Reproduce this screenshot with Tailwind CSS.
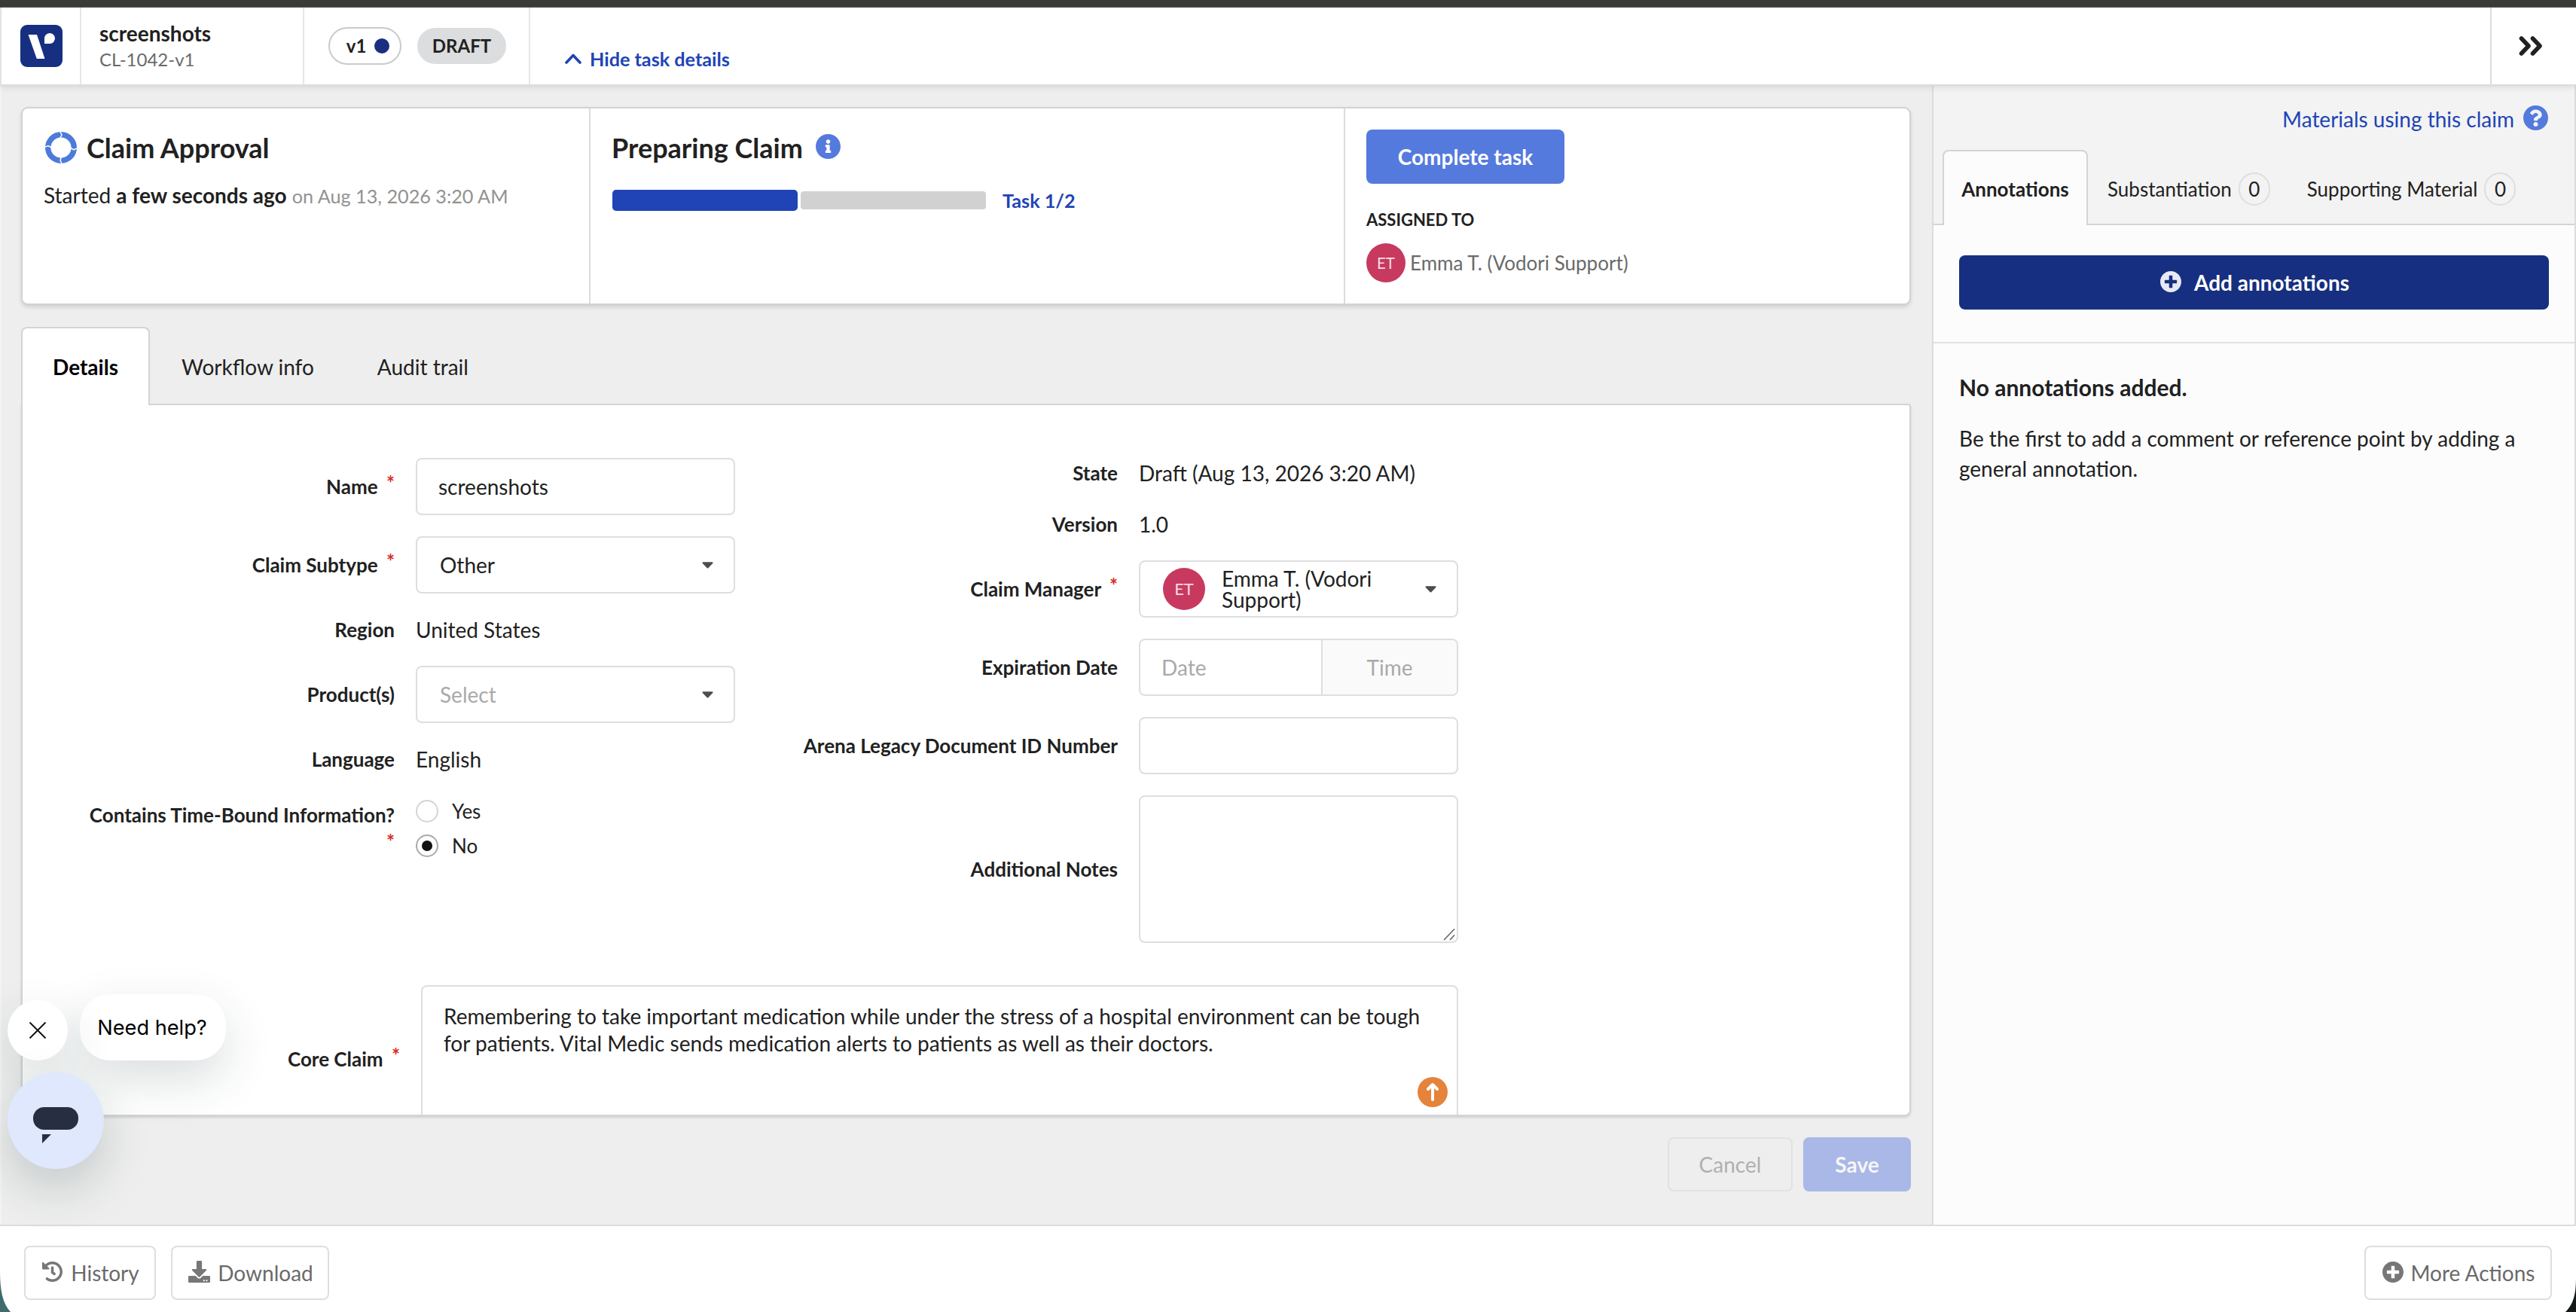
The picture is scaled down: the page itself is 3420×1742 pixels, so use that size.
<!DOCTYPE html>
<html lang="en">
<head>
    <meta charset="UTF-8">
    <meta name="viewport" content="width=device-width, initial-scale=1.0">
    <title>screenshots - CL-1042-v1</title>
    <script src="https://cdn.jsdelivr.net/npm/@tailwindcss/browser@4"></script>
</head>
<body class="relative flex flex-col w-[3420px] h-[1742px] overflow-hidden bg-white text-[#212121] text-[28px] leading-[40px] font-['Lato',sans-serif]">

    <!-- shared icons -->
    <svg class="hidden">
        <symbol id="plus-circle" viewBox="8 8 496 496"><path d="M256 8C119 8 8 119 8 256s111 248 248 248 248-111 248-248S393 8 256 8zm144 276c0 6.600-5.400 12-12 12h-92v92c0 6.600-5.400 12-12 12h-56c-6.600 0-12-5.400-12-12v-92h-92c-6.600 0-12-5.400-12-12v-56c0-6.600 5.400-12 12-12h92v-92c0-6.600 5.400-12 12-12h56c6.600 0 12 5.400 12 12v92h92c6.600 0 12 5.400 12 12v56z"/></symbol>
        <symbol id="caret" viewBox="0 0 16 9"><path d="M1.500 0h13c1 0 1.300 1 .7 1.700L8.800 8.500c-.5.500-1.100.500-1.600 0L.8 1.700C.2 1 .5 0 1.500 0z"/></symbol>
    </svg>

    <div class="h-[10px] shrink-0 bg-[#393c35] border-b-2 border-[#454541]"></div>

    <!-- header -->
    <header class="relative z-10 flex h-[104px] shrink-0 bg-white border-b-2 border-l-2 border-b-[#dcdcdc] border-l-[#e2e2e2] shadow-[0_2px_8px_rgba(0,0,0,0.10)]">
        <div class="w-[106px] border-r-2 border-[#e6e6e6] pl-[25px] pt-[23px]">
            <svg class="w-[56px] h-[56px]" viewBox="0 0 56 56">
                <rect width="56" height="56" rx="9" fill="#162f80"/>
                <path d="M10.500 13h11.500L32.500 45H21.800z" fill="#fff"/>
                <path d="M32 25V18.500a7 7 0 1 1 7 6.500z" fill="#fff"/>
            </svg>
        </div>
        <div class="w-[296px] border-r-2 border-[#e6e6e6] pl-[24px] pt-[17px]">
            <div class="font-bold leading-[34px]">screenshots</div>
            <div class="text-[24px] leading-[36px] text-[#6a6a6a]">CL-1042-v1</div>
        </div>
        <div class="w-[300px] border-r-2 border-[#e6e6e6] pl-[32px] flex items-center gap-[21px] text-[24px] font-bold">
            <div class="w-[97px] h-[50px] rounded-full border-2 border-[#cacaca] flex items-center justify-center gap-[11px] pl-[8px]">v1<span class="w-[20px] h-[20px] rounded-full bg-[#1b2f80]"></span></div>
            <div class="w-[118px] h-[48px] rounded-full bg-[#dcddde] flex items-center justify-center">DRAFT</div>
        </div>
        <div class="flex-1 pl-[46px] pt-[48px]">
            <a class="flex items-center gap-[11px] text-[25.2px] font-bold text-[#2044b5]">
                <svg class="w-[22px] h-[14px]" viewBox="0 0 22 14" fill="none" stroke="currentColor" stroke-width="3.600" stroke-linecap="round" stroke-linejoin="round"><path d="M2 12l9-9.500L20 12"/></svg>
                Hide task details
            </a>
        </div>
        <div class="w-[114px] border-l-2 border-[#dcdcdc] pl-[36px] pt-[37px]">
            <svg class="w-[32px] h-[28px]" viewBox="0 0 32 28" fill="none" stroke="#212121" stroke-width="5.600" stroke-linecap="round" stroke-linejoin="round"><path d="M3.500 4l9.500 10-9.500 10M18.500 4L28 14l-9.500 10"/></svg>
        </div>
    </header>

    <div class="flex h-[1512px] shrink-0">
        <main class="w-[2565px] border-l-2 border-[#f3f3f3] bg-[#eeeeee] pl-[26px] pt-[28px]">

            <!-- task card -->
            <section class="flex w-[2509px] h-[263px] bg-white border-2 border-[#d2d2d2] rounded-[9px] shadow-[0_3px_5px_rgba(0,0,0,0.12)]">
                <div class="w-[754px] border-r-2 border-[#dcdcdc] pl-[28px] pt-[30px]">
                    <div class="flex items-center gap-[13px] pl-[2px] text-[36px] leading-[44px] font-bold">
                        <svg class="w-[42px] h-[42px]" viewBox="0 0 42 42" fill="none">
                            <circle cx="21" cy="21" r="17.300" stroke="#4c7bd9" stroke-width="7.400"/>
                            <path d="M20 0l2 4-2 4M42 22l-4 2-5-3M22 42l-2-4 1.500-4.500M0 20l4-1.500 4.500 2.500" stroke="#fff" stroke-width="1.500"/>
                        </svg>
                        Claim Approval
                    </div>
                    <div class="mt-[21px]">Started <b>a few seconds ago</b> <span class="text-[25.2px] text-[#929292]">on Aug 13, 2026 3:20 AM</span></div>
                </div>
                <div class="w-[1002px] border-r-2 border-[#dcdcdc] pl-[28px] pt-[30px]">
                    <div class="flex items-center gap-[17px] text-[36px] leading-[44px] font-bold">
                        Preparing Claim
                        <svg class="w-[33px] h-[33px] mb-[4px]" viewBox="8 8 496 496" fill="#557add"><path d="M256 8C119.043 8 8 119.083 8 256c0 136.997 111.043 248 248 248s248-111.003 248-248C504 119.083 392.957 8 256 8zm0 110c23.196 0 42 18.804 42 42s-18.804 42-42 42-42-18.804-42-42 18.804-42 42-42zm56 254c0 6.627-5.373 12-12 12h-88c-6.627 0-12-5.373-12-12v-24c0-6.627 5.373-12 12-12h12v-64h-12c-6.627 0-12-5.373-12-12v-24c0-6.627 5.373-12 12-12h64c6.627 0 12 5.373 12 12v100h12c6.627 0 12 5.373 12 12v24z"/></svg>
                    </div>
                    <div class="flex items-center mt-[28px] pl-[1px]">
                        <div class="w-[246px] h-[28px] rounded-[5px] bg-[#2044b5]"></div>
                        <div class="w-[246px] h-[24px] rounded-[4px] bg-[#d1d1d1] ml-[4px]"></div>
                        <div class="ml-[22px] text-[25.2px] font-bold text-[#2044b5]">Task 1/2</div>
                    </div>
                </div>
                <div class="pl-[28px] pt-[28px]">
                    <button class="block w-[263px] h-[72px] rounded-[8px] bg-[#557add] text-white font-bold">Complete task</button>
                    <div class="mt-[30px] text-[22px] leading-[36px] font-bold">ASSIGNED TO</div>
                    <div class="flex items-center gap-[6px] mt-[13px] text-[26px] text-[#6a6a6a]">
                        <span class="w-[52px] h-[52px] rounded-full bg-[#c8395f] text-[#f6dde4] text-[20.5px] flex items-center justify-center">ET</span>
                        Emma T. (Vodori Support)
                    </div>
                </div>
            </section>

            <!-- tabs -->
            <nav class="flex h-[102px] mt-[29px]">
                <div class="relative h-[104px] w-[171px] shrink-0 bg-white border-2 border-b-0 border-[#d4d4d5] rounded-t-[8px] flex items-center justify-center font-bold text-black">Details</div>
                <div class="flex items-center pl-[42px] pr-[42px] pt-[4px]">Workflow info</div>
                <div class="flex items-center pl-[42px] pt-[4px]">Audit trail</div>
            </nav>

            <!-- details form -->
            <section class="relative w-[2509px] h-[946px]">
                <!-- the active tab runs into the panel -->
                <div class="absolute z-10 left-[2px] top-0 w-[167px] h-[2px] bg-white"></div>
                <div class="h-full overflow-hidden bg-white border-2 border-[#d4d4d5] rounded-b-[8px] rounded-tr-[4px] shadow-[0_2px_3px_rgba(0,0,0,0.12)] pt-[70px]">
                    <div class="flex">
                        <div class="w-[956px] flex flex-col gap-[28px]">
                            <div class="flex items-center gap-[28px]">
                                <label class="w-[494px] text-right text-[26px] font-bold">Name <span class="relative -top-[5px] ml-[5px] text-[#db2828]">*</span></label>
                                <div class="w-[424px] h-[76px] border-2 border-[#dedede] rounded-[8px] pl-[28px] flex items-center">screenshots</div>
                            </div>
                            <div class="flex items-center gap-[28px]">
                                <label class="w-[494px] text-right text-[26px] font-bold">Claim Subtype <span class="relative -top-[5px] ml-[5px] text-[#db2828]">*</span></label>
                                <div class="w-[424px] h-[76px] border-2 border-[#dedede] rounded-[8px] pl-[30px] pr-[27px] flex items-center justify-between">Other<svg class="w-[15px] h-[9px] fill-[#4d4d4d]"><use href="#caret"/></svg></div>
                            </div>
                            <div class="flex items-center gap-[28px]">
                                <label class="w-[494px] text-right text-[26px] font-bold">Region</label>
                                <div>United States</div>
                            </div>
                            <div class="flex items-center gap-[28px]">
                                <label class="w-[494px] text-right text-[26px] font-bold">Product(s)</label>
                                <div class="w-[424px] h-[76px] border-2 border-[#dedede] rounded-[8px] pl-[30px] pr-[27px] flex items-center justify-between text-[#a9a9a9]">Select<svg class="w-[15px] h-[9px] fill-[#4d4d4d]"><use href="#caret"/></svg></div>
                            </div>
                            <div class="flex items-center gap-[28px]">
                                <label class="w-[494px] text-right text-[26px] font-bold">Language</label>
                                <div>English</div>
                            </div>
                            <div class="flex items-start gap-[28px]">
                                <label class="w-[494px] mt-[6px] text-right text-[26px] font-bold">Contains Time-Bound Information?<br><span class="relative -top-[5px] text-[#db2828]">*</span></label>
                                <div class="-mt-[2px] text-[26px]">
                                    <div class="flex items-center gap-[18px] h-[46px]"><span class="w-[30px] h-[30px] rounded-full border-2 border-[#d4d4d5]"></span>Yes</div>
                                    <div class="flex items-center gap-[18px] h-[46px]"><span class="w-[30px] h-[30px] rounded-full border-2 border-[#aaaaaa] flex items-center justify-center"><span class="w-[14px] h-[14px] rounded-full bg-[#111]"></span></span>No</div>
                                </div>
                            </div>
                        </div>

                        <div class="flex flex-col gap-[28px]">
                            <div class="flex items-center gap-[28px]">
                                <label class="w-[498px] text-right text-[26px] font-bold">State</label>
                                <div>Draft (Aug 13, 2026 3:20 AM)</div>
                            </div>
                            <div class="flex items-center gap-[28px]">
                                <label class="w-[498px] text-right text-[26px] font-bold">Version</label>
                                <div>1.0</div>
                            </div>
                            <div class="flex items-center gap-[28px]">
                                <label class="w-[498px] text-right text-[26px] font-bold">Claim Manager <span class="relative -top-[5px] ml-[5px] text-[#db2828]">*</span></label>
                                <div class="w-[424px] h-[76px] border-2 border-[#dedede] rounded-[8px] pl-[30px] pr-[27px] flex items-center">
                                    <span class="w-[56px] h-[56px] rounded-full bg-[#c8395f] text-[#f6dde4] text-[22px] flex items-center justify-center">ET</span>
                                    <span class="ml-[22px] flex-1 leading-[28px]">Emma T. (Vodori<br>Support)</span>
                                    <svg class="w-[15px] h-[9px] fill-[#4d4d4d]"><use href="#caret"/></svg>
                                </div>
                            </div>
                            <div class="flex items-center gap-[28px]">
                                <label class="w-[498px] text-right text-[26px] font-bold">Expiration Date</label>
                                <div class="w-[424px] h-[76px] border-2 border-[#dedede] rounded-[8px] overflow-hidden flex text-[#a9a9a9]">
                                    <div class="w-[242px] border-r-2 border-[#dedede] pl-[28px] flex items-center">Date</div>
                                    <div class="flex-1 bg-[#fafafa] flex items-center justify-center">Time</div>
                                </div>
                            </div>
                            <div class="flex items-center gap-[28px]">
                                <label class="w-[498px] text-right text-[26px] font-bold">Arena Legacy Document ID Number</label>
                                <div class="w-[424px] h-[76px] border-2 border-[#dedede] rounded-[8px]"></div>
                            </div>
                            <div class="flex items-center gap-[28px]">
                                <label class="w-[498px] text-right text-[26px] font-bold">Additional Notes</label>
                                <div class="w-[424px] h-[196px] border-2 border-[#dedede] rounded-[8px] flex items-end justify-end">
                                    <svg class="w-[18px] h-[18px]" viewBox="0 0 18 18" stroke="#606060" stroke-width="1.500"><path d="M1 16L15 1.500M9 16l6-6.500"/></svg>
                                </div>
                            </div>
                        </div>
                    </div>

                    <div class="flex items-center gap-[28px] mt-[56px]">
                        <label class="w-[501px] text-right text-[26px] font-bold">Core Claim <span class="relative -top-[5px] ml-[5px] text-[#db2828]">*</span></label>
                        <div class="relative w-[1377px] h-[196px] border-2 border-[#dedede] rounded-[8px] pl-[28px] pt-[21px] leading-[36px]">
                            Remembering to take important medication while under the stress of a hospital environment can be tough<br>for patients. Vital Medic sends medication alerts to patients as well as their doctors.
                            <svg class="absolute right-[12px] top-[120px] w-[40px] h-[40px]" viewBox="0 0 40 40" fill="none" stroke="#fff" stroke-width="4" stroke-linecap="round" stroke-linejoin="round"><circle cx="20" cy="20" r="20" fill="#e5833a" stroke="none"/><path d="M20 30V10.500M14 16l6-6 6 6"/></svg>
                        </div>
                    </div>
                </div>
            </section>

            <div class="flex justify-end gap-[14px] w-[2509px] mt-[28px]">
                <button class="w-[166px] h-[72px] rounded-[8px] border-2 border-[#e1e1e1] text-[#b0b0b0]">Cancel</button>
                <button class="w-[143px] h-[72px] rounded-[8px] bg-[#a9b8e6] text-[#f6f6f6] font-bold">Save</button>
            </div>
        </main>

        <!-- annotations sidebar -->
        <aside class="flex-1 border-l-2 border-r-2 border-[#dcdcdc] bg-[#fcfcfc]">
            <div class="h-[185px] bg-[#f3f3f3] border-b-2 border-[#d4d4d5] pt-[24px]">
                <div class="flex justify-end items-center gap-[12px] pr-[35px] text-[#2044b5]">
                    Materials using this claim
                    <svg class="w-[33px] h-[33px] mb-[3px]" viewBox="8 8 496 496" fill="#557add"><path d="M504 256c0 136.997-111.043 248-248 248S8 392.997 8 256C8 119.083 119.043 8 256 8s248 111.083 248 248zM262.655 90c-54.497 0-89.255 22.957-116.549 63.758-3.536 5.286-2.353 12.415 2.715 16.258l34.699 26.310c5.205 3.947 12.621 3.008 16.665-2.122 17.864-22.658 30.113-35.797 57.303-35.797 20.429 0 45.698 13.148 45.698 32.958 0 14.976-12.363 22.667-32.534 33.976C247.128 238.528 216 254.941 216 296v4c0 6.627 5.373 12 12 12h56c6.627 0 12-5.373 12-12v-1.333c0-28.462 83.186-29.647 83.186-106.667 0-58.002-60.165-102-116.531-102zM256 338c-25.365 0-46 20.635-46 46 0 25.364 20.635 46 46 46s46-20.636 46-46c0-25.365-20.635-46-46-46z"/></svg>
                </div>
                <div class="flex h-[98px] mt-[21px] pl-[12px] text-[26px]">
                    <div class="relative w-[193px] h-[100px] bg-[#fcfcfc] border-2 border-b-0 border-[#d4d4d5] rounded-t-[8px] flex items-center justify-center font-bold pt-[2px]">Annotations</div>
                    <div class="flex items-center gap-[9px] pl-[26px] pt-[5px]">Substantiation<span class="w-[42px] h-[44px] rounded-full border-2 border-[#dedede] flex items-center justify-center">0</span></div>
                    <div class="flex items-center gap-[9px] pl-[49px] pt-[5px]">Supporting Material<span class="w-[42px] h-[44px] rounded-full border-2 border-[#dedede] flex items-center justify-center">0</span></div>
                </div>
            </div>
            <div class="h-[157px] border-b-2 border-[#e2e2e2] pl-[34px] pt-[40px]">
                <button class="w-[783px] h-[72px] rounded-[8px] bg-[#162f80] text-white font-bold flex items-center justify-center gap-[17px] pl-[2px]"><svg class="w-[28px] h-[28px] fill-[#e7e9f2] mb-[2px]"><use href="#plus-circle"/></svg>Add annotations</button>
            </div>
            <div class="pl-[34px] pt-[38px]">
                <h3 class="text-[30px] font-bold">No annotations added.</h3>
                <p class="mt-[28px]">Be the first to add a comment or reference point by adding a<br>general annotation.</p>
            </div>
        </aside>
    </div>

    <!-- bottom bar -->
    <footer class="flex flex-1 items-start justify-between bg-white border-t-2 border-[#dcdcdc] pl-[32px] pr-[32px] pt-[26px] text-[#6a6a6a]">
        <div class="flex gap-[20px]">
            <button class="w-[175px] h-[72px] rounded-[8px] border-2 border-[#dedede] flex items-center justify-center gap-[11px] pl-[2px]"><svg class="w-[27px] h-[27px] fill-[#777] mb-[4px]" viewBox="8 8 496 496"><path d="M504 255.531c.253 136.640-111.180 248.372-247.820 248.468-59.015.042-113.223-20.530-155.822-54.911-11.077-8.940-11.905-25.541-1.839-35.607l11.267-11.267c8.609-8.609 22.353-9.551 31.891-1.984C173.062 425.135 212.781 440 256 440c101.705 0 184-82.311 184-184 0-101.705-82.311-184-184-184-48.814 0-93.149 18.969-126.068 49.932l50.754 50.754c10.080 10.080 2.941 27.314-11.313 27.314H24c-8.837 0-16-7.163-16-16V38.627c0-14.254 17.234-21.393 27.314-11.314l49.372 49.372C129.209 34.136 189.552 8 256 8c136.810 0 247.747 110.780 248 247.531zm-180.912 78.784l9.823-12.630c8.138-10.463 6.253-25.542-4.210-33.679L288 256.349V152c0-13.255-10.745-24-24-24h-16c-13.255 0-24 10.745-24 24v135.651l65.409 50.874c10.463 8.137 25.541 6.253 33.679-4.210z"/></svg>History</button>
            <button class="w-[210px] h-[72px] rounded-[8px] border-2 border-[#dedede] flex items-center justify-center gap-[10px] pl-[2px]"><svg class="w-[29px] h-[29px] fill-[#777] mb-[4px]" viewBox="0 0 512 512"><path d="M216 0h80c13.300 0 24 10.700 24 24v168h87.700c17.800 0 26.700 21.500 14.100 34.100L269.700 378.300c-7.500 7.500-19.800 7.500-27.300 0L90.100 226.100c-12.600-12.600-3.700-34.100 14.100-34.100H192V24c0-13.300 10.700-24 24-24zm296 376v112c0 13.300-10.700 24-24 24H24c-13.300 0-24-10.700-24-24V376c0-13.300 10.700-24 24-24h146.700l49 49c20.100 20.100 52.500 20.100 72.600 0l49-49H488c13.300 0 24 10.700 24 24zm-124 88c0-11-9-20-20-20s-20 9-20 20 9 20 20 20 20-9 20-20zm64 0c0-11-9-20-20-20s-20 9-20 20 9 20 20 20 20-9 20-20z"/></svg>Download</button>
        </div>
        <button class="w-[249px] h-[72px] rounded-[8px] border-2 border-[#dedede] flex items-center justify-center gap-[10px] pl-[1px]"><svg class="w-[28px] h-[28px] fill-[#777] mb-[2px]"><use href="#plus-circle"/></svg>More Actions</button>
    </footer>

    <!-- chat launcher -->
    <div class="absolute z-20 left-[106px] top-[1320px] w-[194px] h-[88px] rounded-[40px] bg-white shadow-[0_24px_64px_rgba(20,50,50,0.16)] flex items-center justify-center text-black text-[27.2px] font-['Inter',sans-serif]"><span class="pr-[2px] pt-[1px]">Need help?</span></div>
    <div class="absolute z-20 left-[10px] top-[1328px] w-[80px] h-[80px] rounded-full bg-white shadow-[0_24px_64px_rgba(20,50,50,0.16)] flex items-center justify-center">
        <svg class="w-[24px] h-[24px]" viewBox="0 0 24 24" stroke="#111" stroke-width="1.900"><path d="M1.500 1.500l21 21M22.500 1.500l-21 21"/></svg>
    </div>
    <div class="absolute z-20 left-[10px] top-[1424px] w-[128px] h-[128px] rounded-full bg-[#dfe8fd] shadow-[0_24px_64px_rgba(20,50,50,0.20)]">
        <svg class="w-[128px] h-[128px]" viewBox="0 0 128 128" fill="#272e42"><rect x="34" y="46" width="60" height="30" rx="14.500"/><path d="M46 82h12L46 94z"/></svg>
    </div>

    <!-- window corners -->
    <svg class="absolute left-0 bottom-0 w-[14px] h-[54px]" viewBox="0 0 14 54"><path d="M0 0C0 24 3 42 14 54H0z" fill="#3f6b6b"/></svg>
    <svg class="absolute right-0 bottom-0 w-[14px] h-[46px]" viewBox="0 0 14 46"><path d="M14 0C14 22 11 35 0 46h14z" fill="#141a18"/></svg>
</body>
</html>
